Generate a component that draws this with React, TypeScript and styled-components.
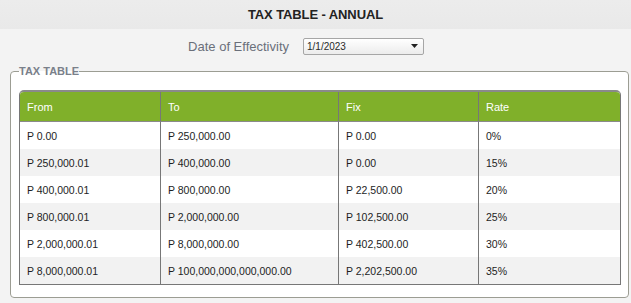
import React from "react";
import styled, { createGlobalStyle } from "styled-components";

const Global = createGlobalStyle`
  html, body { margin: 0; padding: 0; }
  body {
    background: #f3f3f3;
    font-family: "Liberation Sans", Arial, sans-serif;
    width: 631px;
    height: 303px;
    overflow: hidden;
  }
`;

const Page = styled.div`
  display: flex;
  flex-direction: column;
`;

const TitleBar = styled.header`
  height: 29px;
  background: linear-gradient(#ececec, #e9e9e9);
  display: flex;
  align-items: center;
  justify-content: center;
`;

const Title = styled.h1`
  margin: 0;
  font-size: 13px;
  font-weight: bold;
  color: #222;
  letter-spacing: -0.1px;
`;

const FilterRow = styled.div`
  display: grid;
  grid-template-columns: 289px auto;
  column-gap: 14px;
  align-items: center;
  height: 34px;
  margin-bottom: 2px;
`;

const FilterLabel = styled.label`
  justify-self: end;
  font-size: 13px;
  color: #6a6f7a;
`;

const Select = styled.div`
  box-sizing: border-box;
  width: 121px;
  height: 17px;
  border: 1px solid #a6a6a6;
  border-radius: 2px;
  background: linear-gradient(#ffffff, #ececec);
  display: flex;
  align-items: center;
  justify-content: space-between;
  padding: 0 5px 0 3px;
  font-size: 10px;
  color: #2a2a2a;
`;

const Fieldset = styled.fieldset`
  margin: 0 2px 0 10px;
  padding: 12px 7px 12px 8px;
  border: 1px solid #9c9d93;
  border-radius: 4px;
  background: #ffffff;
  min-width: 0;
`;

const Legend = styled.legend`
  padding: 0;
  font-size: 11px;
  font-weight: bold;
  color: #7a808a;
  line-height: 13px;
`;

const Table = styled.table`
  width: 602px;
  table-layout: fixed;
  border-collapse: separate;
  border-spacing: 0;
  border: 1px solid #777;
  border-top: 2px solid #8a8a8a;
  border-radius: 5px 5px 0 0;
  overflow: hidden;
  font-size: 10.5px;
  color: #1e1e1e;
`;

const HeadCell = styled.th<{ $w: number; $last?: boolean }>`
  box-sizing: border-box;
  width: ${(p) => p.$w}px;
  height: 30px;
  padding: 0 0 0 7px;
  background: #80b02a;
  color: #fff;
  font-size: 11px;
  font-weight: normal;
  text-align: left;
  border-bottom: 1px solid #8a8a8a;
  border-right: ${(p) => (p.$last ? "none" : "1px solid #777")};
`;

const Row = styled.tr<{ $alt: boolean }>`
  background: ${(p) => (p.$alt ? "#f2f2f2" : "#ffffff")};
`;

const Cell = styled.td<{ $last?: boolean }>`
  box-sizing: border-box;
  height: 27px;
  padding: 0 0 0 7px;
  white-space: nowrap;
  border-right: ${(p) => (p.$last ? "none" : "1px solid #777")};
`;

const cols = [
  { label: "From", w: 141 },
  { label: "To", w: 178 },
  { label: "Fix", w: 140 },
  { label: "Rate", w: 141 },
];

const rows = [
  ["P 0.00", "P 250,000.00", "P 0.00", "0%"],
  ["P 250,000.01", "P 400,000.00", "P 0.00", "15%"],
  ["P 400,000.01", "P 800,000.00", "P 22,500.00", "20%"],
  ["P 800,000.01", "P 2,000,000.00", "P 102,500.00", "25%"],
  ["P 2,000,000.01", "P 8,000,000.00", "P 402,500.00", "30%"],
  ["P 8,000,000.01", "P 100,000,000,000,000.00", "P 2,202,500.00", "35%"],
];

export default function App() {
  return (
    <Page>
      <Global />
      <TitleBar>
        <Title>TAX TABLE - ANNUAL</Title>
      </TitleBar>
      <FilterRow>
        <FilterLabel>Date of Effectivity</FilterLabel>
        <Select>
          <span>1/1/2023</span>
          <svg width="7" height="4" viewBox="0 0 7 4">
            <path d="M0 0h7L3.5 4z" fill="#222" />
          </svg>
        </Select>
      </FilterRow>
      <Fieldset>
        <Legend>TAX TABLE</Legend>
        <Table>
          <thead>
            <tr>
              {cols.map((c, i) => (
                <HeadCell key={c.label} $w={c.w} $last={i === cols.length - 1}>
                  {c.label}
                </HeadCell>
              ))}
            </tr>
          </thead>
          <tbody>
            {rows.map((r, ri) => (
              <Row key={ri} $alt={ri % 2 === 1}>
                {r.map((v, ci) => (
                  <Cell key={ci} $last={ci === r.length - 1}>
                    {v}
                  </Cell>
                ))}
              </Row>
            ))}
          </tbody>
        </Table>
      </Fieldset>
    </Page>
  );
}
